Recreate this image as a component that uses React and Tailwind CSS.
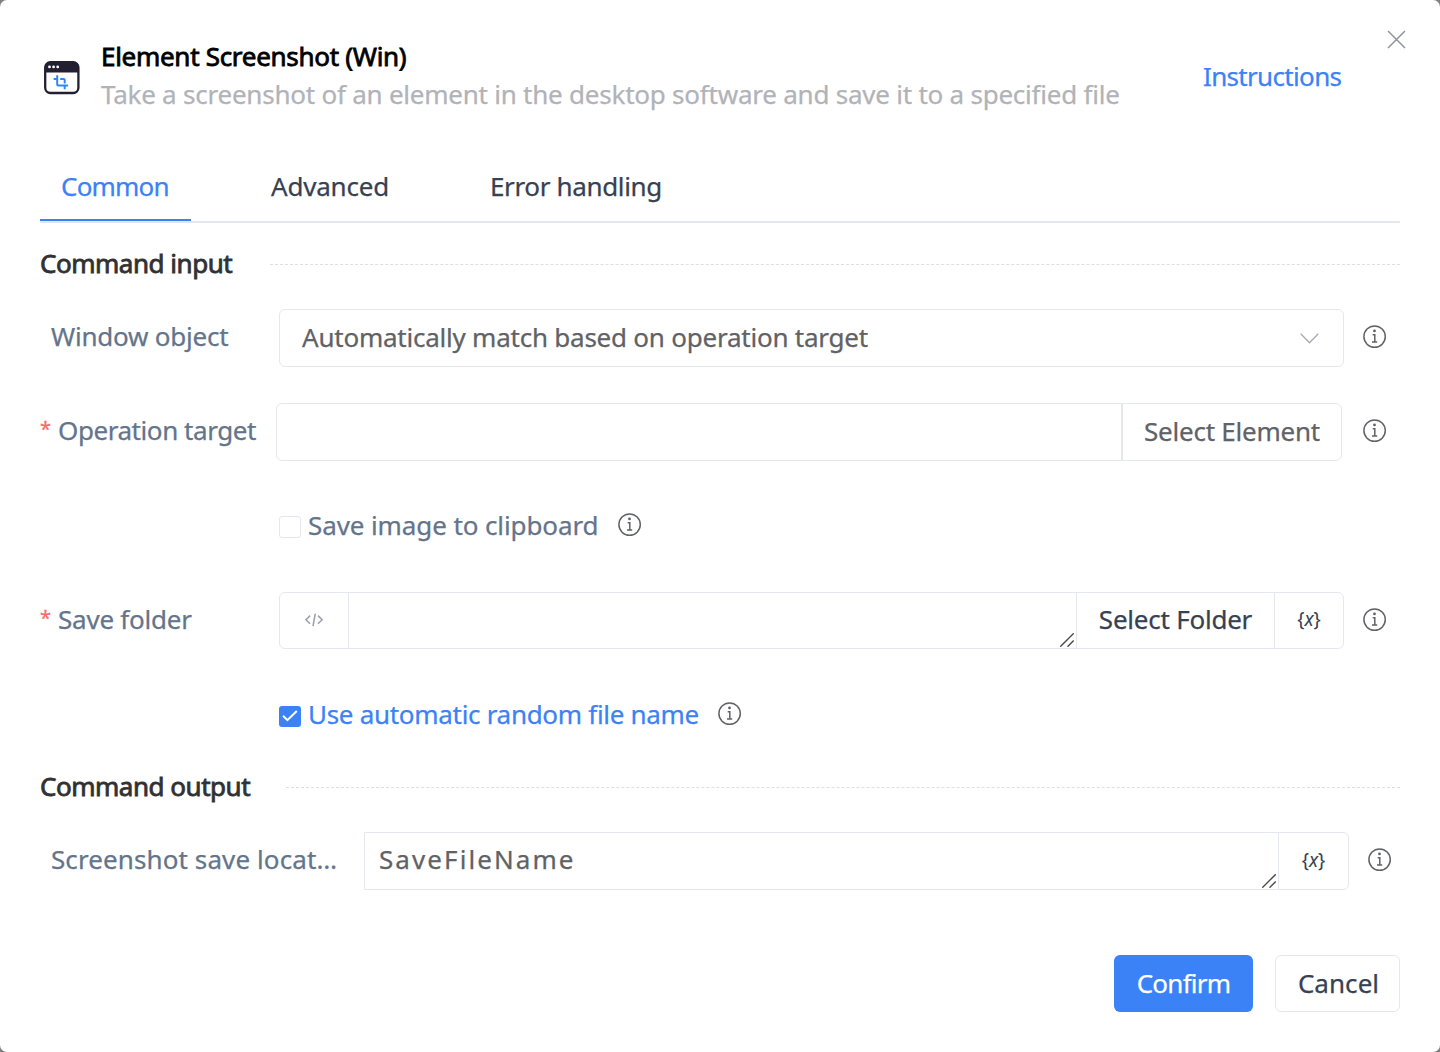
function WindowCropIcon() {
  return (
    <svg width="36" height="34" viewBox="0 0 36 34" fill="none">
      <rect x="1.2" y="1.2" width="33.2" height="30.8" rx="5.2" fill="#fff" stroke="#221f30" strokeWidth="2.3" />
      <path d="M0.8 11.5V6a5.2 5.2 0 0 1 5.2-5h23.6a5.2 5.2 0 0 1 5.2 5v5.5z" fill="#221f30" />
      <circle cx="5.5" cy="5.9" r="1.4" fill="#fff" />
      <circle cx="9.6" cy="5.9" r="1.4" fill="#fff" />
      <circle cx="13.7" cy="5.9" r="1.4" fill="#fff" />
      <path d="M9.6 17.9h3.6M13.2 14.2v9.2q0 1.1 1.1 1.1h9.8M16.2 17.9h3.3q1.2 0 1.2 1.2v3.4M20.7 24.5v3.8" stroke="#2b87ff" strokeWidth="2" />
    </svg>
  );
}

function InfoIcon() {
  return (
    <svg className="shrink-0" width="24" height="24" viewBox="0 0 24 24" fill="none" stroke="#606266">
      <circle cx="11.6" cy="11.6" r="10.7" strokeWidth="1.5" />
      <circle cx="11.5" cy="5.9" r="1.4" fill="#606266" stroke="none" />
      <path d="M9.7 9.8h2.1v7.1M9 17.1h5.2" strokeWidth="1.5" />
    </svg>
  );
}

function ResizeGrip() {
  return (
    <svg className="mr-[2px] mb-px" width="14" height="14" viewBox="0 0 14 14" stroke="#4b4b4b" strokeWidth="1.4">
      <path d="M0.3 13.7L13.7 0.3M7.5 13.7L13.7 7.5" />
    </svg>
  );
}

function VariableIcon() {
  return (
    <span className="flex -translate-y-px items-center text-[19px] leading-none tracking-normal text-[#374151] [-webkit-text-stroke:0]">
      <span>{"{"}</span>
      <span className="text-[19px] italic">x</span>
      <span>{"}"}</span>
    </span>
  );
}

function SectionTitle({ children, width }) {
  return (
    <div className="flex h-[30px] items-center">
      <h2 className={`${width} shrink-0 -translate-y-px tracking-[-0.48px] text-[#303133] [-webkit-text-stroke:0.8px_#303133]`}>{children}</h2>
      <div className="h-0 flex-1 border-t border-dashed border-[#dcdfe6]" />
    </div>
  );
}

function Label({ required, children, className }) {
  return (
    <div className={`flex shrink-0 -translate-y-[2px] items-center whitespace-nowrap text-[#64748b] ${className}`}>
      {required ? <span className="w-[18px] -translate-y-px text-[20px] leading-[30px] text-[#f56c6c] [-webkit-text-stroke:0.3px_#f56c6c]">*</span> : <span className="w-[11px]" />}
      <span>{children}</span>
    </div>
  );
}

export default function App() {
  return (
    <div className="h-[1052px] w-[1440px] bg-[#7f7f7f] font-['Noto_Sans',sans-serif] text-[26px] leading-[36px] tracking-[-0.23px] [-webkit-text-stroke:0.25px_currentColor]">
      <div className="flex h-full flex-col rounded-[7px] bg-white px-10">
        <header className="flex h-[153px] items-start">
          <div className="mt-[61px] ml-1 w-[57px]">
            <WindowCropIcon />
          </div>
          <div className="mt-[38px] w-[1102px] whitespace-nowrap">
            <h1 className="text-black tracking-[-0.29px] [-webkit-text-stroke:0.8px_#000]">Element Screenshot (Win)</h1>
            <p className="mt-[2px] text-[#b1b3b8]">Take a screenshot of an element in the desktop software and save it to a specified file</p>
          </div>
          <a className="mt-[58px] w-[184px] tracking-[-0.67px] text-[#3b82f6]">Instructions</a>
          <svg className="mt-[30px] -mr-2 shrink-0" width="19" height="19" viewBox="0 0 19 19" stroke="#909399" strokeWidth="1.5">
            <path d="M1 1l17 17M18 1L1 18" />
          </svg>
        </header>

        <nav className="flex h-[70px] border-b-2 border-[#e4e7ed] text-[#374151]">
          <div className="h-[68px] w-[151px] border-b-2 border-[#3b82f6] pt-[15px] pl-[21px] tracking-[-0.8px] text-[#3b82f6]">Common</div>
          <div className="w-[219px] pt-[15px] pl-[80px] tracking-[-0.2px]">Advanced</div>
          <div className="pt-[15px] pl-[80px] tracking-[-0.35px]">Error handling</div>
        </nav>

        <main className="flex flex-1 flex-col pt-[26px]">
          <SectionTitle width="w-[230px]">Command input</SectionTitle>

          <div className="mt-[30px] flex h-[58px] items-center">
            <Label className="w-[239px]">Window object</Label>
            <div className="flex h-full w-[1065px] items-center justify-between rounded-[6px] border border-[#e4e7ed] pr-[24px] pl-[22px] text-[#606266]">
              <span className="-translate-y-px">Automatically match based on operation target</span>
              <svg width="19" height="11" viewBox="0 0 19 11" fill="none" stroke="#a8abb2" strokeWidth="1.3">
                <path d="M0.7 0.8l8.8 9 8.8-9" />
              </svg>
            </div>
            <div className="ml-[19px] -mt-[2px]"><InfoIcon /></div>
          </div>

          <div className="mt-[36px] flex h-[58px] items-center">
            <Label required className="w-[236px] tracking-[-0.43px]">Operation target</Label>
            <div className="flex h-full w-[1066px] rounded-[6px] border border-[#e4e7ed]">
              <div className="flex-1" />
              <button className="w-[220px] border-l-2 border-[#e4e7ed] pb-[2px] text-[#606266]">Select Element</button>
            </div>
            <div className="ml-[21px] -mt-[2px]"><InfoIcon /></div>
          </div>

          <div className="mt-[37px] flex h-[58px] items-center pl-[239px] text-[#64748b]">
            <span className="mr-[7px] size-[22px] rounded-[3px] border border-[#e4e7ed]" />
            <span className="-translate-y-[2px] tracking-[-0.1px]">Save image to clipboard</span>
            <div className="ml-[19px] -mt-[4px]"><InfoIcon /></div>
          </div>

          <div className="mt-[36px] flex h-[57px] items-center">
            <Label required className="w-[239px]">Save folder</Label>
            <div className="flex h-full w-[1065px] rounded-[6px] border border-[#e4e7ed]">
              <div className="flex w-[69px] items-center justify-center border-r border-[#e4e7ed]">
                <svg className="-translate-y-px" width="20" height="14" viewBox="0 0 20 14" fill="none" stroke="#9ca3af" strokeWidth="1.6">
                  <path d="M6.1 2.6L2 6.7l4.1 4.1M14 2.6l4.1 4.1-4.1 4.1M11.3 0.6L9 13.2" />
                </svg>
              </div>
              <div className="flex flex-1 items-end justify-end"><ResizeGrip /></div>
              <button className="w-[199px] border-x border-[#e4e7ed] pb-[3px] text-[#374151]">Select Folder</button>
              <div className="flex w-[68px] items-center justify-center"><VariableIcon /></div>
            </div>
            <div className="ml-[19px] -mt-px"><InfoIcon /></div>
          </div>

          <div className="mt-[38px] flex h-[58px] items-center pl-[239px] text-[#3b82f6]">
            <span className="mr-[7px] flex h-[21px] w-[22px] items-center justify-center rounded-[3px] bg-[#3b82f6]">
              <svg width="16" height="12" viewBox="0 0 16 12" fill="none" stroke="#fff" strokeWidth="2">
                <path d="M1 5.8l4.4 4.4L14.8 1" />
              </svg>
            </span>
            <span className="-translate-y-[2px] tracking-[-0.3px]">Use automatic random file name</span>
            <div className="ml-[19px] -mt-[4px]"><InfoIcon /></div>
          </div>

          <div className="mt-[27px]">
            <SectionTitle width="w-[246px]">Command output</SectionTitle>
          </div>

          <div className="mt-[30px] flex h-[58px] items-center">
            <Label className="w-[324px] tracking-[0.1px]">Screenshot save locat…</Label>
            <div className="flex h-full w-[985px] rounded-r-[6px] border border-[#e4e7ed]">
              <div className="flex flex-1 items-center justify-between">
                <span className="-translate-y-[2px] pl-[14px] tracking-[2.08px] text-[#606266]">SaveFileName</span>
                <span className="self-end"><ResizeGrip /></span>
              </div>
              <div className="flex w-[70px] items-center justify-center border-l border-[#e4e7ed]"><VariableIcon /></div>
            </div>
            <div className="ml-[19px] -mt-[2px]"><InfoIcon /></div>
          </div>
        </main>

        <footer className="mb-10 flex h-[57px] justify-end gap-[22px]">
          <button className="w-[139px] rounded-[6px] bg-[#3b82f6] pb-[2px] tracking-[-0.75px] text-white">Confirm</button>
          <button className="w-[125px] rounded-[6px] border border-[#e4e7ed] pb-[2px] pl-[2px] tracking-[0.05px] text-[#374151]">Cancel</button>
        </footer>
      </div>
    </div>
  );
}
